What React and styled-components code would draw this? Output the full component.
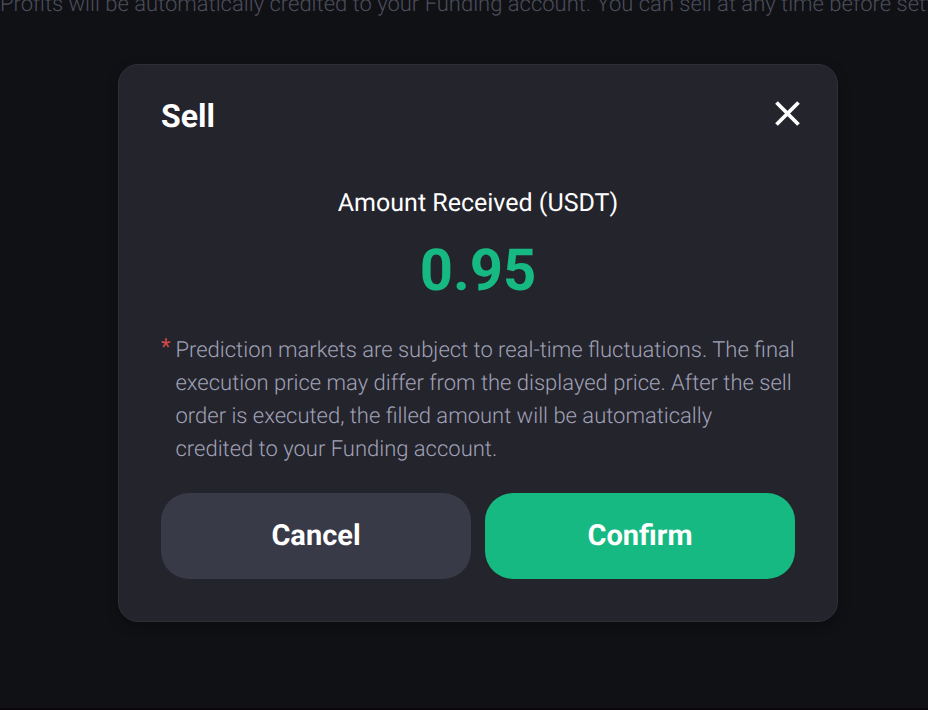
import styled, { createGlobalStyle } from 'styled-components'

const GlobalStyle = createGlobalStyle`
  * {
    box-sizing: border-box;
  }
  body {
    margin: 0;
    background: #101115;
    font-family: Roboto, "Liberation Sans", sans-serif;
    text-rendering: geometricPrecision;
  }
`

const Page = styled.div`
  position: relative;
  display: flex;
  flex-direction: column;
  min-height: 100vh;
  overflow: hidden;
  border-bottom: 2px solid #0b060a;
`

const Notice = styled.p`
  position: absolute;
  top: -9px;
  left: 0;
  margin: 0;
  color: #4c4d5b;
  font-size: 22px;
  font-weight: 300;
  line-height: 28px;
  white-space: nowrap;
`

const Dialog = styled.section`
  display: flex;
  flex-direction: column;
  width: calc(100% - 208px);
  max-width: 720px;
  margin: 64px 90px 84px 118px;
  padding: 32px 42px 42px;
  background: #24242c;
  border: 1px solid #2e2f38;
  border-radius: 20px;
  box-shadow: 0 4px 12px rgba(0, 0, 0, 0.3);
`

const Header = styled.header`
  display: flex;
  align-items: flex-start;
  justify-content: space-between;
  height: 38px;
`

const Title = styled.h2`
  margin: 0;
  color: #ffffff;
  font-size: 32px;
  font-weight: 700;
  line-height: 38px;
`

const CloseButton = styled.button`
  display: flex;
  align-items: center;
  justify-content: center;
  width: 34px;
  height: 34px;
  margin-right: -10px;
  padding: 0;
  background: none;
  border: none;
  color: #ffffff;
  cursor: pointer;
`

const Amount = styled.div`
  display: flex;
  flex-direction: column;
  align-items: center;
  gap: 17px;
  margin-top: 53px;
`

const AmountLabel = styled.span`
  color: #ffffff;
  font-size: 25px;
  line-height: 32px;
`

const AmountValue = styled.strong`
  color: #16b982;
  font-size: 58px;
  font-weight: 700;
  line-height: 68px;
`

const Disclaimer = styled.div`
  display: flex;
  gap: 5px;
  margin-top: 29px;
  color: #a0a1b7;
  font-size: 22px;
  font-weight: 300;
  line-height: 33px;
`

const Asterisk = styled.span`
  color: #d4494b;
  font-weight: 400;
  line-height: 28px;
`

const DisclaimerText = styled.p`
  margin: 0;
`

const Actions = styled.div`
  display: flex;
  gap: 14px;
  margin-top: 27px;
`

const ActionButton = styled.button`
  flex: 1;
  height: 86px;
  padding: 0;
  background: ${props => props.$primary ? '#16b982' : '#393a47'};
  border: none;
  border-radius: 28px;
  color: #ffffff;
  font-family: inherit;
  font-size: 29px;
  font-weight: 700;
  text-rendering: inherit;
  cursor: pointer;
`

export default function App(){
  return(
    <Page>
      <GlobalStyle />
      <Notice>Profits will be automatically credited to your Funding account. You can sell at any time before settlement.</Notice>
      <Dialog role="dialog" aria-labelledby="sell-title">
        <Header>
          <Title id="sell-title">Sell</Title>
          <CloseButton type="button" aria-label="Close">
            <svg width="34" height="34" viewBox="0 0 34 34" fill="none" stroke="currentColor" strokeWidth="3.8">
              <path d="M5.5 5.5L27.5 27.5M27.5 5.5L5.5 27.5" />
            </svg>
          </CloseButton>
        </Header>
        <Amount>
          <AmountLabel>Amount Received (USDT)</AmountLabel>
          <AmountValue>0.95</AmountValue>
        </Amount>
        <Disclaimer>
          <Asterisk>*</Asterisk>
          <DisclaimerText>
            Prediction markets are subject to real-time fluctuations. The final execution price may differ from the displayed price. After the sell order is executed, the filled amount will be automatically credited to your Funding account.
          </DisclaimerText>
        </Disclaimer>
        <Actions>
          <ActionButton type="button">Cancel</ActionButton>
          <ActionButton type="button" $primary>Confirm</ActionButton>
        </Actions>
      </Dialog>
    </Page>
  )
}
